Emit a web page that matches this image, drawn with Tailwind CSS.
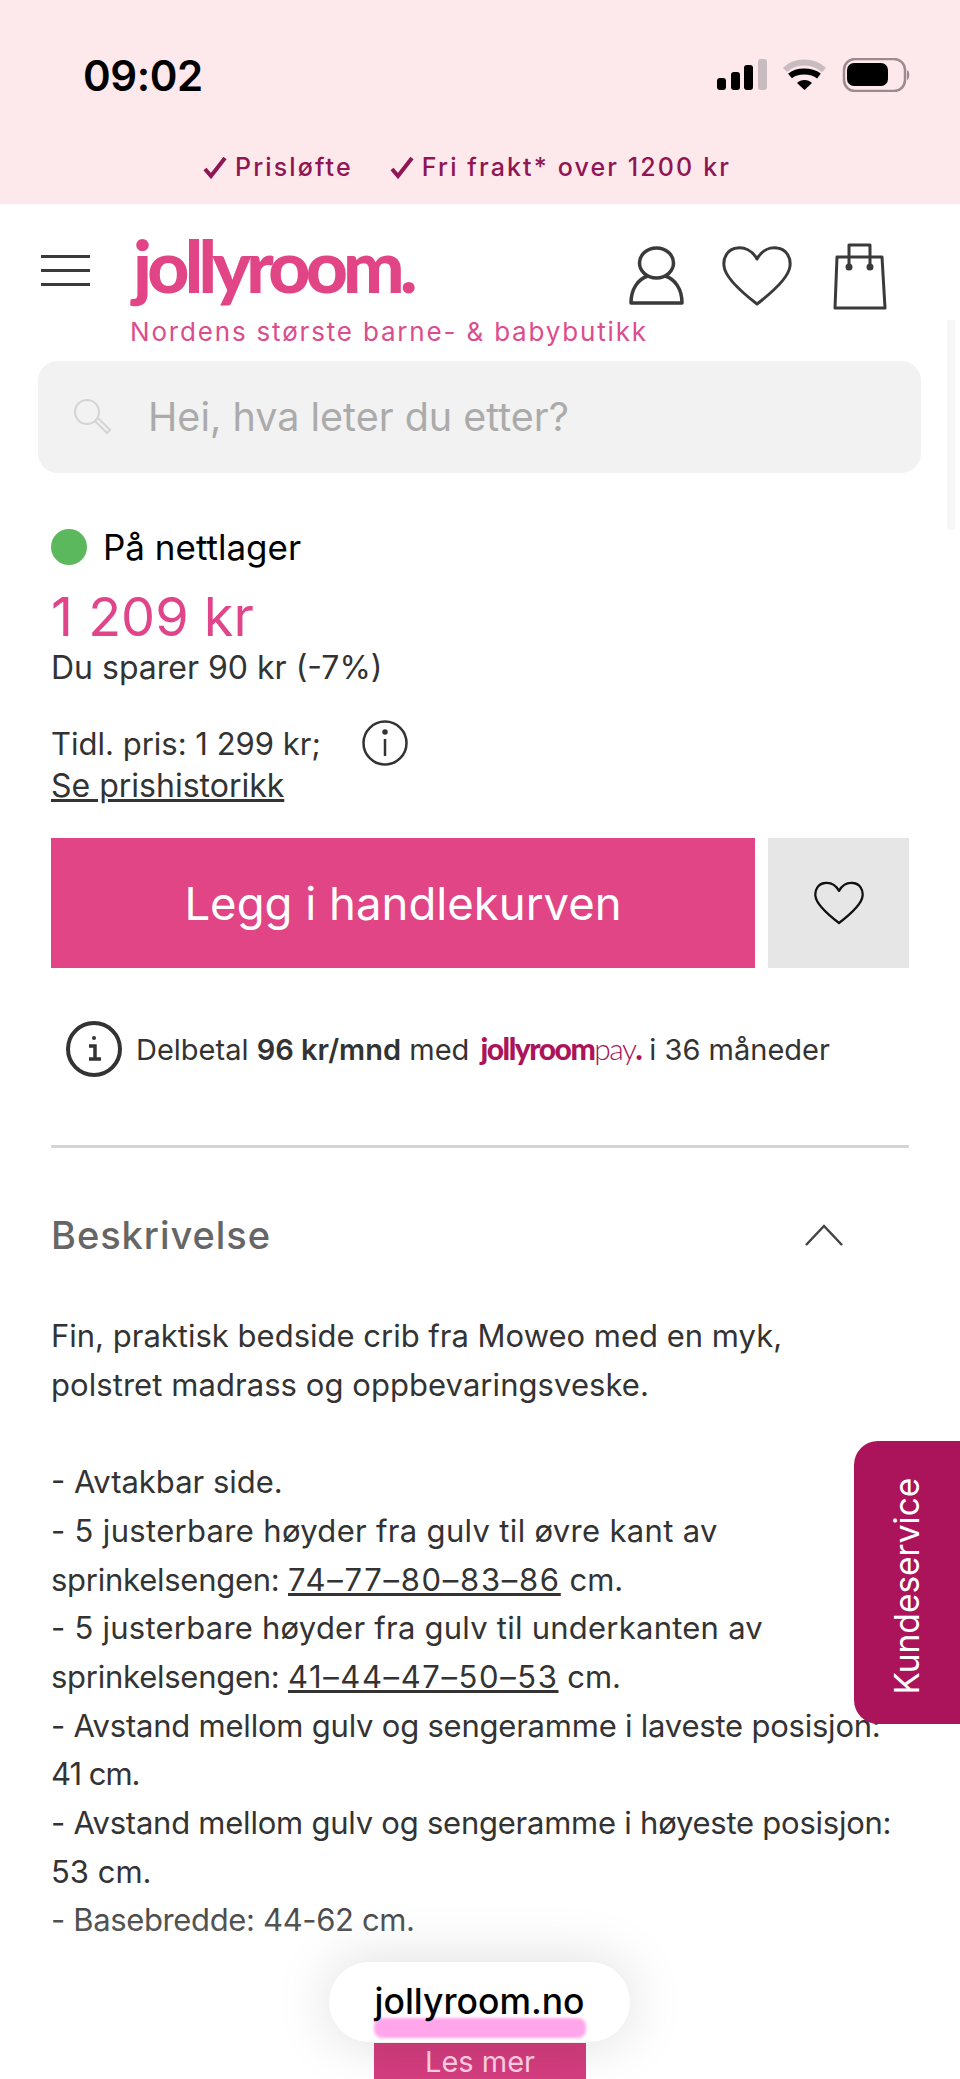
<!DOCTYPE html>
<html lang="no">
<head>
  <meta charset="UTF-8">
  <title>Jollyroom</title>
  <script src="https://cdn.jsdelivr.net/npm/@tailwindcss/browser@4"></script>
</head>
<body class="bg-white">
  <div class="relative w-[960px] h-[2079px] overflow-hidden bg-white font-['Inter',sans-serif] text-[#333]">
    <!-- Status bar + promo -->
    <header class="h-[204px] bg-[#fde8ec]">
      <div class="h-[150px] flex items-center justify-between pl-[83px] pr-[48px]">
        <span class="text-[42px] font-semibold text-black tracking-[-0.01em]">09:02</span>
        <svg width="195" height="34" viewBox="0 0 195 34">
          <rect x="0" y="20" width="9" height="12" rx="3" fill="#000"/>
          <rect x="14" y="14" width="9" height="18" rx="3" fill="#000"/>
          <rect x="27" y="7" width="9" height="25" rx="3" fill="#000"/>
          <rect x="41" y="1" width="9" height="31" rx="3" fill="#c9bcc0"/>
          <path d="M68 12 C78 2 96 2 107 12" fill="none" stroke="#c9bcc0" stroke-width="6"/>
          <path d="M73 18 C80 12 94 12 102 18" fill="none" stroke="#000" stroke-width="6"/>
          <path d="M80 25 C84 21 91 21 95 25 L87.5 32 Z" fill="#000"/>
          <rect x="127" y="1" width="61" height="32" rx="11" fill="none" stroke="#9c8a90" stroke-width="2.5"/>
          <rect x="130" y="5" width="41" height="23" rx="7" fill="#000"/>
          <path d="M190 12 C193 13 193 21 190 22 Z" fill="#9c8a90"/>
        </svg>
      </div>
      <div class="h-[36px] flex items-center justify-center gap-[37px] pr-[26px] text-[25px] font-medium tracking-[0.085em] text-[#8f1553]">
        <span class="flex items-center gap-[8px]">
          <svg width="24" height="22" viewBox="0 0 24 22"><path d="M2 12 L8 19 L22 1" fill="none" stroke="#8f1553" stroke-width="4"/></svg>
          Prisløfte
        </span>
        <span class="flex items-center gap-[8px]">
          <svg width="24" height="22" viewBox="0 0 24 22"><path d="M2 12 L8 19 L22 1" fill="none" stroke="#8f1553" stroke-width="4"/></svg>
          Fri frakt* over 1200 kr
        </span>
      </div>
    </header>

    <!-- Logo row -->
    <nav class="h-[157px] flex items-start pl-[41px] pr-[73px]">
      <div class="mt-[51px] w-[49px] shrink-0 flex flex-col gap-[11px]">
        <div class="h-[3px] bg-[#3a3a3a]"></div>
        <div class="h-[3px] bg-[#3a3a3a]"></div>
        <div class="h-[3px] bg-[#3a3a3a]"></div>
      </div>
      <div class="ml-[40px] w-[480px] shrink-0 flex flex-col whitespace-nowrap">
        <span class="ml-[3px] mt-[16px] h-[90px] leading-[90px] text-[73px] font-['Lato',sans-serif] font-black tracking-[-0.065em] text-[#e14586]">jollyroom.</span>
        <span class="mt-[4px] text-[26px] leading-[36px] tracking-[0.07em] text-[#db4d8d]">Nordens største barne- &amp; babybutikk</span>
      </div>
      <div class="ml-auto mt-[39px] flex items-start shrink-0">
        <svg class="mt-[3px] mr-[38px]" width="55" height="59" viewBox="0 0 55 59" fill="none" stroke="#3a3a3a" stroke-width="3.5" stroke-linejoin="round">
          <ellipse cx="27.5" cy="17" rx="17" ry="15"/>
          <path d="M19 30 C9 33 2 43 2 57 L53 57 C53 43 46 33 36 30"/>
        </svg>
        <svg class="mt-[3px] mr-[41px]" width="70" height="60" viewBox="0 0 70 60" fill="none" stroke="#3a3a3a" stroke-width="3" stroke-linejoin="round">
          <path d="M35 13 C30 4 22 1 15 2 C6 3 1 11 2 20 C3 32 22 48 35 58 C48 48 67 32 68 20 C69 11 64 3 55 2 C48 1 40 4 35 13Z"/>
        </svg>
        <svg width="54" height="67" viewBox="0 0 54 67" fill="none" stroke="#3a3a3a" stroke-width="3" stroke-linejoin="round">
          <path d="M4 14 L49 14 L52 65 L2 65 Z"/>
          <path d="M16 24 L16 2 L37 2 L37 24"/>
          <circle cx="16" cy="24" r="2" fill="#3a3a3a"/>
          <circle cx="37" cy="24" r="2" fill="#3a3a3a"/>
        </svg>
      </div>
    </nav>

    <!-- Search -->
    <div class="mx-[38px] w-[883px] h-[112px] rounded-[20px] bg-[#f2f2f2] flex items-center pl-[35px]">
      <svg width="38" height="38" viewBox="0 0 38 38" fill="none" stroke="#d4d4d4" stroke-width="2">
        <circle cx="14" cy="14" r="12"/>
        <path d="M22 23 L34 35 L37 32 L25 20"/>
      </svg>
      <span class="ml-[37px] text-[39.5px] pt-[2px] text-[#ababab]">Hei, hva leter du etter?</span>
    </div>

    <!-- Product -->
    <main class="px-[51px]">
      <div class="mt-[56px] h-[36px] flex items-center gap-[16px]">
        <span class="w-[36px] h-[36px] rounded-full bg-[#5cb85c]"></span>
        <span class="text-[35px] text-black">På nettlager</span>
      </div>
      <div class="mt-[21px] h-[60px] flex items-center text-[54px] text-[#e0458a]">1 209 kr</div>
      <div class="mt-[2px] h-[40px] flex items-center text-[32px]">Du sparer 90 kr (-7%)</div>
      <div class="mt-[33px] h-[46px] flex items-center gap-[41px]">
        <span class="text-[31px]">Tidl. pris: 1 299 kr;</span>
        <svg class="-mt-[2px]" width="46" height="46" viewBox="0 0 46 46" fill="none" stroke="#333" stroke-width="2.5">
          <circle cx="23" cy="23" r="21.5"/>
          <path d="M23 19 L23 36"/>
          <circle cx="23" cy="12" r="1.5" fill="#333"/>
        </svg>
      </div>
      <a class="block h-[38px] leading-[38px] text-[32px] underline">Se prishistorikk</a>

      <div class="mt-[33px] flex gap-[13px] h-[130px]">
        <button class="w-[704px] pt-[2px] bg-[#e14586] text-white text-[45.5px]">Legg i handlekurven</button>
        <button class="w-[141px] bg-[#e6e6e6] flex items-center justify-center">
          <svg width="50" height="44" viewBox="0 0 70 60" fill="none" stroke="#111" stroke-width="3.2" stroke-linejoin="round">
            <path d="M35 13 C30 4 22 1 15 2 C6 3 1 11 2 20 C3 32 22 48 35 58 C48 48 67 32 68 20 C69 11 64 3 55 2 C48 1 40 4 35 13Z"/>
          </svg>
        </button>
      </div>

      <div class="mt-[52px] h-[60px] flex items-center pl-[15px] gap-[14px] text-[29px] whitespace-nowrap">
        <svg class="-mt-[3px]" width="56" height="56" viewBox="0 0 56 56" fill="none" stroke="#333" stroke-width="4">
          <circle cx="28" cy="28" r="26"/>
          <circle cx="28" cy="17" r="2" fill="#333" stroke="none"/>
          <path d="M23 25 L29 25 L29 38 M23 38 L35 38" stroke-width="3.5"/>
        </svg>
        <span class="-mt-[3px]">Delbetal <b class="font-semibold">96 kr/mnd</b> med <span class="ml-[3px] text-[30px] font-['Lato',sans-serif] font-black tracking-[-0.05em] text-[#ab145a]">jollyroom<span class="font-light">pay</span>.</span> i 36 måneder</span>
      </div>

      <div class="mt-[65px] h-[3px] bg-[#d5d5d5]"></div>

      <div class="mt-[62px] h-[50px] flex items-center justify-between pr-[66px]">
        <h2 class="text-[38px] font-medium tracking-[0.025em] text-[#666]">Beskrivelse</h2>
        <svg width="38" height="22" viewBox="0 0 38 22" fill="none" stroke="#444" stroke-width="2.5"><path d="M1 21 L19 2 L37 21"/></svg>
      </div>

      <div class="mt-[52px] w-[880px] text-[31px] leading-[48.7px] whitespace-nowrap">
        <p>Fin, praktisk bedside crib fra Moweo med en myk,</p>
        <p class="tracking-[0.06px]">polstret madrass og oppbevaringsveske.</p>
        <p class="h-[48.7px]"></p>
        <p>- Avtakbar side.</p>
        <p class="tracking-[0.32px]">- 5 justerbare høyder fra gulv til øvre kant av</p>
        <p><span class="tracking-[-0.25px]">sprinkelsengen: </span><u class="tracking-[1.7px]">74–77–80–83–86</u> cm.</p>
        <p class="tracking-[0.24px]">- 5 justerbare høyder fra gulv til underkanten av</p>
        <p><span class="tracking-[-0.25px]">sprinkelsengen: </span><u class="tracking-[1.6px]">41–44–47–50–53</u> cm.</p>
        <p class="tracking-[-0.22px]">- Avstand mellom gulv og sengeramme i laveste posisjon:</p>
        <p class="tracking-[-1px]">41 cm.</p>
        <p class="tracking-[-0.24px]">- Avstand mellom gulv og sengeramme i høyeste posisjon:</p>
        <p>53 cm.</p>
        <p class="tracking-[-0.36px]">- Basebredde: 44-62 cm.</p>
      </div>
    </main>

    <!-- Scrollbar trace -->
    <div class="absolute left-[947px] top-[320px] w-[8px] h-[210px] bg-[#f7f7f7]"></div>

    <!-- Kundeservice tab -->
    <div class="absolute left-[854px] top-[1441px] w-[106px] h-[283px] pt-[8px] rounded-l-[24px] bg-[#ab145a] flex items-center justify-center">
      <span class="text-white text-[33.5px] whitespace-nowrap -rotate-90">Kundeservice</span>
    </div>

    <!-- Bottom fade + URL pill -->
    <div class="absolute left-0 right-0 bottom-0 h-[200px] bg-gradient-to-b from-white/0 to-white/70"></div>
    <div class="absolute left-[374px] bottom-0 w-[212px] h-[36px] bg-[#d43d7f] text-[#ffd0e4] text-[29px] leading-[38px] text-center">Les mer</div>
    <div class="absolute left-[329px] top-[1962px] w-[301px] h-[80px] rounded-[40px] bg-white shadow-[0_0_60px_rgba(0,0,0,0.14)] flex justify-center">
      <div class="absolute left-[45px] top-[56px] w-[212px] h-[20px] rounded-[8px] bg-[#ffa6ea] blur-[1.5px]"></div>
      <span class="relative text-[35.5px] font-medium leading-[80px] text-black">jollyroom.no</span>
    </div>
  </div>
</body>
</html>
